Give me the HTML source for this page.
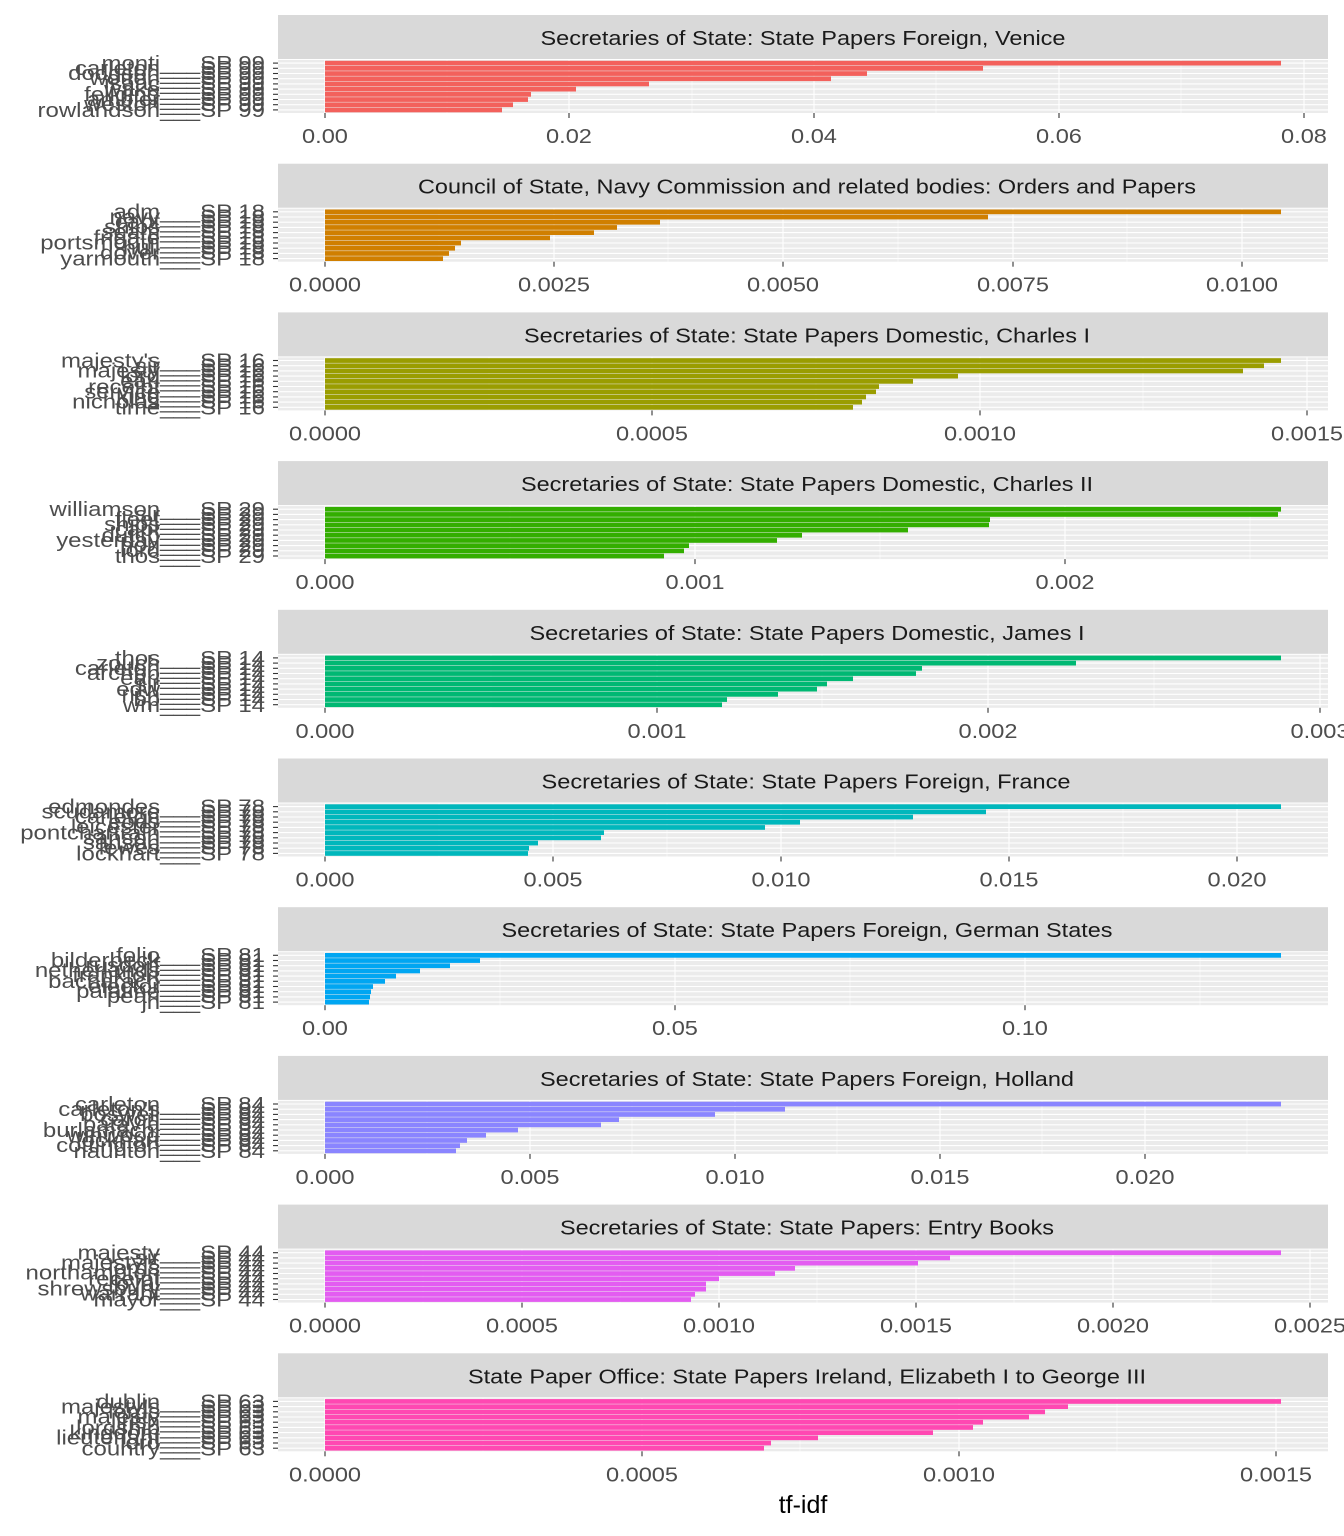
<!DOCTYPE html>
<html><head><meta charset="utf-8"><style>
html,body{margin:0;padding:0;background:#fff;}
svg{display:block;}
.st{font-family:"Liberation Sans",sans-serif;font-size:20px;fill:#1a1a1a;}
.yl text{font-family:"Liberation Sans",sans-serif;font-size:20.5px;fill:#4d4d4d;text-anchor:end;transform-box:fill-box;transform-origin:right center;transform:scaleX(1.17);}
.xl text{font-family:"Liberation Sans",sans-serif;font-size:20.5px;fill:#4d4d4d;text-anchor:middle;transform-box:fill-box;transform-origin:center;transform:scaleX(1.15);}
.mj{stroke:#fff;stroke-width:1.1;}
.mn{stroke:#fff;stroke-width:0.55;}
</style></head><body>
<svg width="1344" height="1536" viewBox="0 0 1344 1536" xmlns="http://www.w3.org/2000/svg">
<defs>
<g id="base">
<rect x="278" y="15" width="1050" height="44" fill="#d9d9d9"/>
<rect x="278" y="60" width="1050" height="53" fill="#ebebeb"/>
<g class="mj">
<line x1="278" x2="1328" y1="63.1" y2="63.1"/><line x1="278" x2="1328" y1="68.3" y2="68.3"/>
<line x1="278" x2="1328" y1="73.5" y2="73.5"/><line x1="278" x2="1328" y1="78.7" y2="78.7"/>
<line x1="278" x2="1328" y1="83.9" y2="83.9"/><line x1="278" x2="1328" y1="89.1" y2="89.1"/>
<line x1="278" x2="1328" y1="94.3" y2="94.3"/><line x1="278" x2="1328" y1="99.5" y2="99.5"/>
<line x1="278" x2="1328" y1="104.7" y2="104.7"/><line x1="278" x2="1328" y1="109.9" y2="109.9"/>
</g>
<g stroke="#333" stroke-width="1.1">
<line x1="273" x2="278" y1="63.1" y2="63.1"/><line x1="273" x2="278" y1="68.3" y2="68.3"/>
<line x1="273" x2="278" y1="73.5" y2="73.5"/><line x1="273" x2="278" y1="78.7" y2="78.7"/>
<line x1="273" x2="278" y1="83.9" y2="83.9"/><line x1="273" x2="278" y1="89.1" y2="89.1"/>
<line x1="273" x2="278" y1="94.3" y2="94.3"/><line x1="273" x2="278" y1="99.5" y2="99.5"/>
<line x1="273" x2="278" y1="104.7" y2="104.7"/><line x1="273" x2="278" y1="109.9" y2="109.9"/>
</g>
</g>
</defs>

<!-- Panel 1 -->
<g transform="translate(0,0)">
<use href="#base"/>
<g class="mn"><line x1="447" x2="447" y1="60" y2="113"/><line x1="692" x2="692" y1="60" y2="113"/><line x1="936" x2="936" y1="60" y2="113"/><line x1="1181" x2="1181" y1="60" y2="113"/></g>
<g class="mj"><line x1="325" x2="325" y1="60" y2="113"/><line x1="569" x2="569" y1="60" y2="113"/><line x1="814" x2="814" y1="60" y2="113"/><line x1="1059" x2="1059" y1="60" y2="113"/><line x1="1304" x2="1304" y1="60" y2="113"/></g>
<g fill="#F3615C">
<rect x="325" y="60.8" width="956" height="4.7"/><rect x="325" y="66" width="658" height="4.7"/><rect x="325" y="71.2" width="542" height="4.7"/><rect x="325" y="76.4" width="506" height="4.7"/><rect x="325" y="81.6" width="324" height="4.7"/><rect x="325" y="86.8" width="251" height="4.7"/><rect x="325" y="92" width="206" height="4.7"/><rect x="325" y="97.2" width="203" height="4.7"/><rect x="325" y="102.4" width="188" height="4.7"/><rect x="325" y="107.6" width="177" height="4.7"/>
</g>
<text class="st" x="803" y="45" text-anchor="middle" textLength="525" lengthAdjust="spacingAndGlyphs">Secretaries of State: State Papers Foreign, Venice</text>
<g class="yl"><text x="265" y="70">monti___SP 99</text><text x="265" y="75">carleton___SP 99</text><text x="265" y="80">dodgson___SP 99</text><text x="265" y="85">wotton___SP 99</text><text x="265" y="90">isaac___SP 99</text><text x="265" y="96">wake___SP 99</text><text x="265" y="101">feilding___SP 99</text><text x="265" y="106">ambler___SP 99</text><text x="265" y="111">weston___SP 99</text><text x="265" y="117">rowlandson___SP 99</text></g>
<g stroke="#333" stroke-width="1.1"><line x1="325" x2="325" y1="113" y2="118"/><line x1="569" x2="569" y1="113" y2="118"/><line x1="814" x2="814" y1="113" y2="118"/><line x1="1059" x2="1059" y1="113" y2="118"/><line x1="1304" x2="1304" y1="113" y2="118"/></g>
<g class="xl"><text x="325" y="143">0.00</text><text x="569" y="143">0.02</text><text x="814" y="143">0.04</text><text x="1059" y="143">0.06</text><text x="1304" y="143">0.08</text></g>
</g>

<!-- Panel 2 -->
<g transform="translate(0,148.7)">
<use href="#base"/>
<g class="mn"><line x1="439" x2="439" y1="60" y2="113"/><line x1="668" x2="668" y1="60" y2="113"/><line x1="898" x2="898" y1="60" y2="113"/><line x1="1127" x2="1127" y1="60" y2="113"/></g>
<g class="mj"><line x1="325" x2="325" y1="60" y2="113"/><line x1="554" x2="554" y1="60" y2="113"/><line x1="783" x2="783" y1="60" y2="113"/><line x1="1013" x2="1013" y1="60" y2="113"/><line x1="1242" x2="1242" y1="60" y2="113"/></g>
<g fill="#D07F00">
<rect x="325" y="60.8" width="956" height="4.7"/><rect x="325" y="66" width="663" height="4.7"/><rect x="325" y="71.2" width="335" height="4.7"/><rect x="325" y="76.4" width="292" height="4.7"/><rect x="325" y="81.6" width="269" height="4.7"/><rect x="325" y="86.8" width="225" height="4.7"/><rect x="325" y="92" width="136" height="4.7"/><rect x="325" y="97.2" width="130" height="4.7"/><rect x="325" y="102.4" width="124" height="4.7"/><rect x="325" y="107.6" width="118" height="4.7"/>
</g>
<text class="st" x="807" y="45" text-anchor="middle" textLength="778" lengthAdjust="spacingAndGlyphs">Council of State, Navy Commission and related bodies: Orders and Papers</text>
<g class="yl"><text x="265" y="70">adm___SP 18</text><text x="265" y="75">navy___SP 18</text><text x="265" y="80">capt___SP 18</text><text x="265" y="85">ships___SP 18</text><text x="265" y="90">seam___SP 18</text><text x="265" y="96">frigate___SP 18</text><text x="265" y="101">portsmouth___SP 18</text><text x="265" y="106">hull___SP 18</text><text x="265" y="111">dover___SP 18</text><text x="265" y="117">yarmouth___SP 18</text></g>
<g stroke="#333" stroke-width="1.1"><line x1="325" x2="325" y1="113" y2="118"/><line x1="554" x2="554" y1="113" y2="118"/><line x1="783" x2="783" y1="113" y2="118"/><line x1="1013" x2="1013" y1="113" y2="118"/><line x1="1242" x2="1242" y1="113" y2="118"/></g>
<g class="xl"><text x="325" y="143">0.0000</text><text x="554" y="143">0.0025</text><text x="783" y="143">0.0050</text><text x="1013" y="143">0.0075</text><text x="1242" y="143">0.0100</text></g>
</g>

<!-- Panel 3 -->
<g transform="translate(0,297.4)">
<use href="#base"/>
<g class="mn"><line x1="489" x2="489" y1="60" y2="113"/><line x1="816" x2="816" y1="60" y2="113"/><line x1="1143" x2="1143" y1="60" y2="113"/></g>
<g class="mj"><line x1="325" x2="325" y1="60" y2="113"/><line x1="652" x2="652" y1="60" y2="113"/><line x1="980" x2="980" y1="60" y2="113"/><line x1="1307" x2="1307" y1="60" y2="113"/></g>
<g fill="#9A9D00">
<rect x="325" y="60.8" width="956" height="4.7"/><rect x="325" y="66" width="939" height="4.7"/><rect x="325" y="71.2" width="918" height="4.7"/><rect x="325" y="76.4" width="633" height="4.7"/><rect x="325" y="81.6" width="588" height="4.7"/><rect x="325" y="86.8" width="554" height="4.7"/><rect x="325" y="92" width="551" height="4.7"/><rect x="325" y="97.2" width="541" height="4.7"/><rect x="325" y="102.4" width="537" height="4.7"/><rect x="325" y="107.6" width="528" height="4.7"/>
</g>
<text class="st" x="807" y="45" text-anchor="middle" textLength="566" lengthAdjust="spacingAndGlyphs">Secretaries of State: State Papers Domestic, Charles I</text>
<g class="yl"><text x="265" y="70">majesty's___SP 16</text><text x="265" y="75">sir___SP 16</text><text x="265" y="80">majesty___SP 16</text><text x="265" y="85">lord___SP 16</text><text x="265" y="90">earl___SP 16</text><text x="265" y="96">receipt___SP 16</text><text x="265" y="101">service___SP 16</text><text x="265" y="106">king___SP 16</text><text x="265" y="111">nicholas___SP 16</text><text x="265" y="117">time___SP 16</text></g>
<g stroke="#333" stroke-width="1.1"><line x1="325" x2="325" y1="113" y2="118"/><line x1="652" x2="652" y1="113" y2="118"/><line x1="980" x2="980" y1="113" y2="118"/><line x1="1307" x2="1307" y1="113" y2="118"/></g>
<g class="xl"><text x="325" y="143">0.0000</text><text x="652" y="143">0.0005</text><text x="980" y="143">0.0010</text><text x="1307" y="143">0.0015</text></g>
</g>

<!-- Panel 4 -->
<g transform="translate(0,446.1)">
<use href="#base"/>
<g class="mn"><line x1="510" x2="510" y1="60" y2="113"/><line x1="880" x2="880" y1="60" y2="113"/><line x1="1250" x2="1250" y1="60" y2="113"/></g>
<g class="mj"><line x1="325" x2="325" y1="60" y2="113"/><line x1="695" x2="695" y1="60" y2="113"/><line x1="1065" x2="1065" y1="60" y2="113"/></g>
<g fill="#33AE00">
<rect x="325" y="60.8" width="956" height="4.7"/><rect x="325" y="66" width="953" height="4.7"/><rect x="325" y="71.2" width="665" height="4.7"/><rect x="325" y="76.4" width="664" height="4.7"/><rect x="325" y="81.6" width="583" height="4.7"/><rect x="325" y="86.8" width="477" height="4.7"/><rect x="325" y="92" width="452" height="4.7"/><rect x="325" y="97.2" width="364" height="4.7"/><rect x="325" y="102.4" width="359" height="4.7"/><rect x="325" y="107.6" width="339" height="4.7"/>
</g>
<text class="st" x="807" y="45" text-anchor="middle" textLength="572" lengthAdjust="spacingAndGlyphs">Secretaries of State: State Papers Domestic, Charles II</text>
<g class="yl"><text x="265" y="70">williamson___SP 29</text><text x="265" y="75">sir___SP 29</text><text x="265" y="80">fleet___SP 29</text><text x="265" y="85">ships___SP 29</text><text x="265" y="90">capt___SP 29</text><text x="265" y="96">dutch___SP 29</text><text x="265" y="101">yesterday___SP 29</text><text x="265" y="106">hon___SP 29</text><text x="265" y="111">lord___SP 29</text><text x="265" y="117">thos___SP 29</text></g>
<g stroke="#333" stroke-width="1.1"><line x1="325" x2="325" y1="113" y2="118"/><line x1="695" x2="695" y1="113" y2="118"/><line x1="1065" x2="1065" y1="113" y2="118"/></g>
<g class="xl"><text x="325" y="143">0.000</text><text x="695" y="143">0.001</text><text x="1065" y="143">0.002</text></g>
</g>

<!-- Panel 5 -->
<g transform="translate(0,594.8)">
<use href="#base"/>
<g class="mn"><line x1="491" x2="491" y1="60" y2="113"/><line x1="822" x2="822" y1="60" y2="113"/><line x1="1154" x2="1154" y1="60" y2="113"/></g>
<g class="mj"><line x1="325" x2="325" y1="60" y2="113"/><line x1="657" x2="657" y1="60" y2="113"/><line x1="988" x2="988" y1="60" y2="113"/><line x1="1320" x2="1320" y1="60" y2="113"/></g>
<g fill="#00B873">
<rect x="325" y="60.8" width="956" height="4.7"/><rect x="325" y="66" width="751" height="4.7"/><rect x="325" y="71.2" width="597" height="4.7"/><rect x="325" y="76.4" width="591" height="4.7"/><rect x="325" y="81.6" width="528" height="4.7"/><rect x="325" y="86.8" width="502" height="4.7"/><rect x="325" y="92" width="492" height="4.7"/><rect x="325" y="97.2" width="453" height="4.7"/><rect x="325" y="102.4" width="402" height="4.7"/><rect x="325" y="107.6" width="397" height="4.7"/>
</g>
<text class="st" x="807" y="45" text-anchor="middle" textLength="555" lengthAdjust="spacingAndGlyphs">Secretaries of State: State Papers Domestic, James I</text>
<g class="yl"><text x="265" y="70">thos___SP 14</text><text x="265" y="75">zouch___SP 14</text><text x="265" y="80">carleton___SP 14</text><text x="265" y="85">archbp___SP 14</text><text x="265" y="90">earl___SP 14</text><text x="265" y="96">sir___SP 14</text><text x="265" y="101">edw___SP 14</text><text x="265" y="106">rich___SP 14</text><text x="265" y="111">bp___SP 14</text><text x="265" y="117">wm___SP 14</text></g>
<g stroke="#333" stroke-width="1.1"><line x1="325" x2="325" y1="113" y2="118"/><line x1="657" x2="657" y1="113" y2="118"/><line x1="988" x2="988" y1="113" y2="118"/><line x1="1320" x2="1320" y1="113" y2="118"/></g>
<g class="xl"><text x="325" y="143">0.000</text><text x="657" y="143">0.001</text><text x="988" y="143">0.002</text><text x="1320" y="143">0.003</text></g>
</g>

<!-- Panel 6 -->
<g transform="translate(0,743.5)">
<use href="#base"/>
<g class="mn"><line x1="439" x2="439" y1="60" y2="113"/><line x1="667" x2="667" y1="60" y2="113"/><line x1="895" x2="895" y1="60" y2="113"/><line x1="1123" x2="1123" y1="60" y2="113"/></g>
<g class="mj"><line x1="325" x2="325" y1="60" y2="113"/><line x1="553" x2="553" y1="60" y2="113"/><line x1="781" x2="781" y1="60" y2="113"/><line x1="1009" x2="1009" y1="60" y2="113"/><line x1="1237" x2="1237" y1="60" y2="113"/></g>
<g fill="#00B7BC">
<rect x="325" y="60.8" width="956" height="4.7"/><rect x="325" y="66" width="661" height="4.7"/><rect x="325" y="71.2" width="588" height="4.7"/><rect x="325" y="76.4" width="475" height="4.7"/><rect x="325" y="81.6" width="440" height="4.7"/><rect x="325" y="86.8" width="279" height="4.7"/><rect x="325" y="92" width="276" height="4.7"/><rect x="325" y="97.2" width="213" height="4.7"/><rect x="325" y="102.4" width="204" height="4.7"/><rect x="325" y="107.6" width="203" height="4.7"/>
</g>
<text class="st" x="806" y="45" text-anchor="middle" textLength="529" lengthAdjust="spacingAndGlyphs">Secretaries of State: State Papers Foreign, France</text>
<g class="yl"><text x="265" y="70">edmondes___SP 78</text><text x="265" y="75">scudamore___SP 78</text><text x="265" y="80">carleton___SP 78</text><text x="265" y="85">eods___SP 78</text><text x="265" y="90">leicester___SP 78</text><text x="265" y="96">pontchartrain___SP 78</text><text x="265" y="101">sanson___SP 78</text><text x="265" y="106">sanson___SP 78</text><text x="265" y="111">lewes___SP 78</text><text x="265" y="117">lockhart___SP 78</text></g>
<g stroke="#333" stroke-width="1.1"><line x1="325" x2="325" y1="113" y2="118"/><line x1="553" x2="553" y1="113" y2="118"/><line x1="781" x2="781" y1="113" y2="118"/><line x1="1009" x2="1009" y1="113" y2="118"/><line x1="1237" x2="1237" y1="113" y2="118"/></g>
<g class="xl"><text x="325" y="143">0.000</text><text x="553" y="143">0.005</text><text x="781" y="143">0.010</text><text x="1009" y="143">0.015</text><text x="1237" y="143">0.020</text></g>
</g>

<!-- Panel 7 -->
<g transform="translate(0,892.2)">
<use href="#base"/>
<g class="mn"><line x1="500" x2="500" y1="60" y2="113"/><line x1="850" x2="850" y1="60" y2="113"/><line x1="1200" x2="1200" y1="60" y2="113"/></g>
<g class="mj"><line x1="325" x2="325" y1="60" y2="113"/><line x1="675" x2="675" y1="60" y2="113"/><line x1="1025" x2="1025" y1="60" y2="113"/></g>
<g fill="#00A6F2">
<rect x="325" y="60.8" width="956" height="4.7"/><rect x="325" y="66" width="155" height="4.7"/><rect x="325" y="71.2" width="125" height="4.7"/><rect x="325" y="76.4" width="95" height="4.7"/><rect x="325" y="81.6" width="71" height="4.7"/><rect x="325" y="86.8" width="60" height="4.7"/><rect x="325" y="92" width="48" height="4.7"/><rect x="325" y="97.2" width="46" height="4.7"/><rect x="325" y="102.4" width="45" height="4.7"/><rect x="325" y="107.6" width="44" height="4.7"/>
</g>
<text class="st" x="807" y="45" text-anchor="middle" textLength="611" lengthAdjust="spacingAndGlyphs">Secretaries of State: State Papers Foreign, German States</text>
<g class="yl"><text x="265" y="70">folio___SP 81</text><text x="265" y="75">bilderbeck___SP 81</text><text x="265" y="80">rusdorf___SP 81</text><text x="265" y="85">netherlands___SP 81</text><text x="265" y="90">frankfort___SP 81</text><text x="265" y="96">bacharach___SP 81</text><text x="265" y="101">elector___SP 81</text><text x="265" y="106">palatine___SP 81</text><text x="265" y="111">pearl___SP 81</text><text x="265" y="117">jn___SP 81</text></g>
<g stroke="#333" stroke-width="1.1"><line x1="325" x2="325" y1="113" y2="118"/><line x1="675" x2="675" y1="113" y2="118"/><line x1="1025" x2="1025" y1="113" y2="118"/></g>
<g class="xl"><text x="325" y="143">0.00</text><text x="675" y="143">0.05</text><text x="1025" y="143">0.10</text></g>
</g>

<!-- Panel 8 -->
<g transform="translate(0,1040.9)">
<use href="#base"/>
<g class="mn"><line x1="427" x2="427" y1="60" y2="113"/><line x1="632" x2="632" y1="60" y2="113"/><line x1="837" x2="837" y1="60" y2="113"/><line x1="1042" x2="1042" y1="60" y2="113"/><line x1="1247" x2="1247" y1="60" y2="113"/></g>
<g class="mj"><line x1="325" x2="325" y1="60" y2="113"/><line x1="530" x2="530" y1="60" y2="113"/><line x1="735" x2="735" y1="60" y2="113"/><line x1="940" x2="940" y1="60" y2="113"/><line x1="1145" x2="1145" y1="60" y2="113"/></g>
<g fill="#8A85FF">
<rect x="325" y="60.8" width="956" height="4.7"/><rect x="325" y="66" width="460" height="4.7"/><rect x="325" y="71.2" width="390" height="4.7"/><rect x="325" y="76.4" width="294" height="4.7"/><rect x="325" y="81.6" width="276" height="4.7"/><rect x="325" y="86.8" width="193" height="4.7"/><rect x="325" y="92" width="161" height="4.7"/><rect x="325" y="97.2" width="142" height="4.7"/><rect x="325" y="102.4" width="135" height="4.7"/><rect x="325" y="107.6" width="131" height="4.7"/>
</g>
<text class="st" x="807" y="45" text-anchor="middle" textLength="534" lengthAdjust="spacingAndGlyphs">Secretaries of State: State Papers Foreign, Holland</text>
<g class="yl"><text x="265" y="70">carleton___SP 84</text><text x="265" y="75">carleton's___SP 84</text><text x="265" y="80">boswell___SP 84</text><text x="265" y="85">caron___SP 84</text><text x="265" y="90">batavia___SP 84</text><text x="265" y="96">burlamachi___SP 84</text><text x="265" y="101">winwood___SP 84</text><text x="265" y="106">lockhart___SP 84</text><text x="265" y="111">cottington___SP 84</text><text x="265" y="117">naunton___SP 84</text></g>
<g stroke="#333" stroke-width="1.1"><line x1="325" x2="325" y1="113" y2="118"/><line x1="530" x2="530" y1="113" y2="118"/><line x1="735" x2="735" y1="113" y2="118"/><line x1="940" x2="940" y1="113" y2="118"/><line x1="1145" x2="1145" y1="113" y2="118"/></g>
<g class="xl"><text x="325" y="143">0.000</text><text x="530" y="143">0.005</text><text x="735" y="143">0.010</text><text x="940" y="143">0.015</text><text x="1145" y="143">0.020</text></g>
</g>

<!-- Panel 9 -->
<g transform="translate(0,1189.6)">
<use href="#base"/>
<g class="mn"><line x1="423" x2="423" y1="60" y2="113"/><line x1="620" x2="620" y1="60" y2="113"/><line x1="817" x2="817" y1="60" y2="113"/><line x1="1014" x2="1014" y1="60" y2="113"/><line x1="1211" x2="1211" y1="60" y2="113"/></g>
<g class="mj"><line x1="325" x2="325" y1="60" y2="113"/><line x1="522" x2="522" y1="60" y2="113"/><line x1="719" x2="719" y1="60" y2="113"/><line x1="916" x2="916" y1="60" y2="113"/><line x1="1113" x2="1113" y1="60" y2="113"/><line x1="1310" x2="1310" y1="60" y2="113"/></g>
<g fill="#E35CF1">
<rect x="325" y="60.8" width="956" height="4.7"/><rect x="325" y="66" width="625" height="4.7"/><rect x="325" y="71.2" width="593" height="4.7"/><rect x="325" y="76.4" width="470" height="4.7"/><rect x="325" y="81.6" width="450" height="4.7"/><rect x="325" y="86.8" width="394" height="4.7"/><rect x="325" y="92" width="381" height="4.7"/><rect x="325" y="97.2" width="381" height="4.7"/><rect x="325" y="102.4" width="370" height="4.7"/><rect x="325" y="107.6" width="366" height="4.7"/>
</g>
<text class="st" x="807" y="45" text-anchor="middle" textLength="494" lengthAdjust="spacingAndGlyphs">Secretaries of State: State Papers: Entry Books</text>
<g class="yl"><text x="265" y="70">majesty___SP 44</text><text x="265" y="75">sir___SP 44</text><text x="265" y="80">majesty's___SP 44</text><text x="265" y="85">lords___SP 44</text><text x="265" y="90">northampton___SP 44</text><text x="265" y="96">receipt___SP 44</text><text x="265" y="101">royal___SP 44</text><text x="265" y="106">shrewsbury___SP 44</text><text x="265" y="111">warrant___SP 44</text><text x="265" y="117">mayor___SP 44</text></g>
<g stroke="#333" stroke-width="1.1"><line x1="325" x2="325" y1="113" y2="118"/><line x1="522" x2="522" y1="113" y2="118"/><line x1="719" x2="719" y1="113" y2="118"/><line x1="916" x2="916" y1="113" y2="118"/><line x1="1113" x2="1113" y1="113" y2="118"/><line x1="1310" x2="1310" y1="113" y2="118"/></g>
<g class="xl"><text x="325" y="143">0.0000</text><text x="522" y="143">0.0005</text><text x="719" y="143">0.0010</text><text x="916" y="143">0.0015</text><text x="1113" y="143">0.0020</text><text x="1310" y="143">0.0025</text></g>
</g>

<!-- Panel 10 -->
<g transform="translate(0,1338.3)">
<use href="#base"/>
<g class="mn"><line x1="483" x2="483" y1="60" y2="113"/><line x1="800" x2="800" y1="60" y2="113"/><line x1="1117" x2="1117" y1="60" y2="113"/></g>
<g class="mj"><line x1="325" x2="325" y1="60" y2="113"/><line x1="642" x2="642" y1="60" y2="113"/><line x1="959" x2="959" y1="60" y2="113"/><line x1="1276" x2="1276" y1="60" y2="113"/></g>
<g fill="#FF48B2">
<rect x="325" y="60.8" width="956" height="4.7"/><rect x="325" y="66" width="743" height="4.7"/><rect x="325" y="71.2" width="720" height="4.7"/><rect x="325" y="76.4" width="704" height="4.7"/><rect x="325" y="81.6" width="658" height="4.7"/><rect x="325" y="86.8" width="648" height="4.7"/><rect x="325" y="92" width="608" height="4.7"/><rect x="325" y="97.2" width="493" height="4.7"/><rect x="325" y="102.4" width="446" height="4.7"/><rect x="325" y="107.6" width="439" height="4.7"/>
</g>
<text class="st" x="807" y="45" text-anchor="middle" textLength="678" lengthAdjust="spacingAndGlyphs">State Paper Office: State Papers Ireland, Elizabeth I to George III</text>
<g class="yl"><text x="265" y="70">dublin___SP 63</text><text x="265" y="75">majesty's___SP 63</text><text x="265" y="80">lords___SP 63</text><text x="265" y="85">majesty___SP 63</text><text x="265" y="90">irish___SP 63</text><text x="265" y="96">lordship___SP 63</text><text x="265" y="101">kingdom___SP 63</text><text x="265" y="106">lieutenant___SP 63</text><text x="265" y="111">lord___SP 63</text><text x="265" y="117">country___SP 63</text></g>
<g stroke="#333" stroke-width="1.1"><line x1="325" x2="325" y1="113" y2="118"/><line x1="642" x2="642" y1="113" y2="118"/><line x1="959" x2="959" y1="113" y2="118"/><line x1="1276" x2="1276" y1="113" y2="118"/></g>
<g class="xl"><text x="325" y="143">0.0000</text><text x="642" y="143">0.0005</text><text x="959" y="143">0.0010</text><text x="1276" y="143">0.0015</text></g>
</g>

<text x="803" y="1513" text-anchor="middle" font-family="Liberation Sans, sans-serif" font-size="25" fill="#000">tf-idf</text>
</svg>
</body></html>
